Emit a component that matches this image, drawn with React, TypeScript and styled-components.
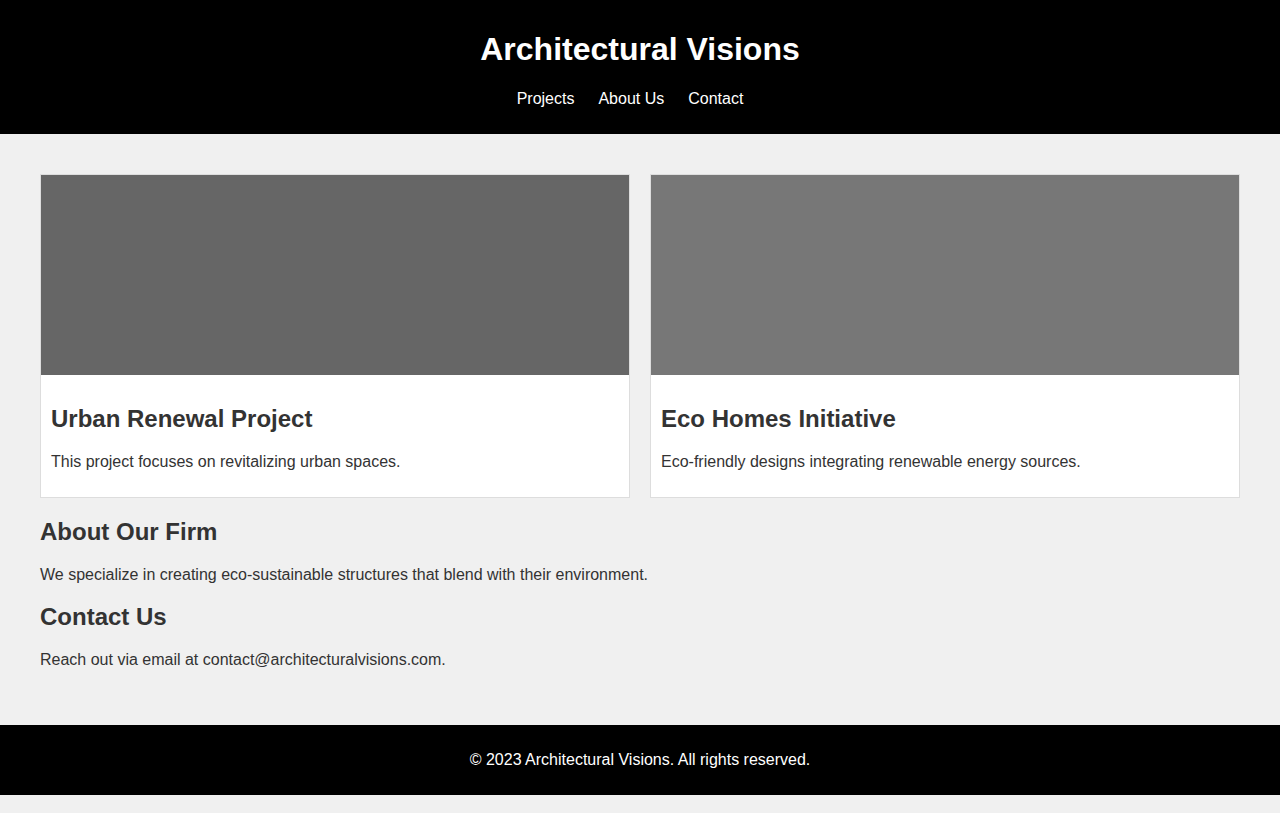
import styled, { createGlobalStyle } from 'styled-components';

const GlobalStyle = createGlobalStyle`
  body {
    margin: 0;
    font-family: 'Liberation Sans', Arial, sans-serif;
    background: #f0f0f0;
    color: #333;
  }
`;

interface Project {
  title: string;
  description: string;
  shade: string;
}

const projects: Project[] = [
  {
    title: 'Urban Renewal Project',
    description: 'This project focuses on revitalizing urban spaces.',
    shade: '#666',
  },
  {
    title: 'Eco Homes Initiative',
    description: 'Eco-friendly designs integrating renewable energy sources.',
    shade: '#777',
  },
];

const App = () => {
  return (
    <>
      <GlobalStyle />
      <Header>
        <h1>Architectural Visions</h1>
        <Nav>
          <li>
            <a href="#projects">Projects</a>
          </li>
          <li>
            <a href="#about">About Us</a>
          </li>
          <li>
            <a href="#contact">Contact</a>
          </li>
        </Nav>
      </Header>
      <Main>
        <ProjectGrid id="projects">
          {projects.map((project) => (
            <Card key={project.title}>
              <Thumb $shade={project.shade} />
              <CardBody>
                <h2>{project.title}</h2>
                <p>{project.description}</p>
              </CardBody>
            </Card>
          ))}
        </ProjectGrid>
        <Section id="about">
          <h2>About Our Firm</h2>
          <p>
            We specialize in creating eco-sustainable structures that blend with
            their environment.
          </p>
        </Section>
        <Section id="contact">
          <h2>Contact Us</h2>
          <p>Reach out via email at contact@architecturalvisions.com.</p>
        </Section>
      </Main>
      <Footer>
        <p>&copy; 2023 Architectural Visions. All rights reserved.</p>
      </Footer>
    </>
  );
};

const Header = styled.header`
  background: #000;
  color: #fff;
  text-align: center;
  padding: 10px;
  h1 {
    font-size: 32px;
    margin: 21.44px 0;
  }
`;

// trailing space on the right mirrors the last item's margin in the original
const Nav = styled.ul`
  list-style: none;
  margin: 16px 0;
  padding: 0 20px 0 0;
  display: flex;
  justify-content: center;
  gap: 24px;
  a {
    color: #fff;
    text-decoration: none;
    font-size: 16px;
  }
`;

const Main = styled.main`
  padding: 40px;
`;

const ProjectGrid = styled.div`
  display: grid;
  grid-template-columns: 1fr 1fr;
  gap: 20px;
`;

const Card = styled.article`
  background: #fff;
  border: 1px solid #ddd;
`;

const Thumb = styled.div<{ $shade: string }>`
  height: 200px;
  background: ${(p) => p.$shade};
`;

const CardBody = styled.div`
  padding: 10px;
  h2 {
    font-size: 24px;
    margin: 19.92px 0;
  }
  p {
    margin: 16px 0;
  }
`;

const Section = styled.section`
  h2 {
    font-size: 24px;
    margin: 19.92px 0;
  }
  p {
    margin: 16px 0;
  }
`;

const Footer = styled.footer`
  background: #000;
  color: #fff;
  text-align: center;
  padding: 10px;
  p {
    margin: 16px 0;
  }
`;

export default App;
